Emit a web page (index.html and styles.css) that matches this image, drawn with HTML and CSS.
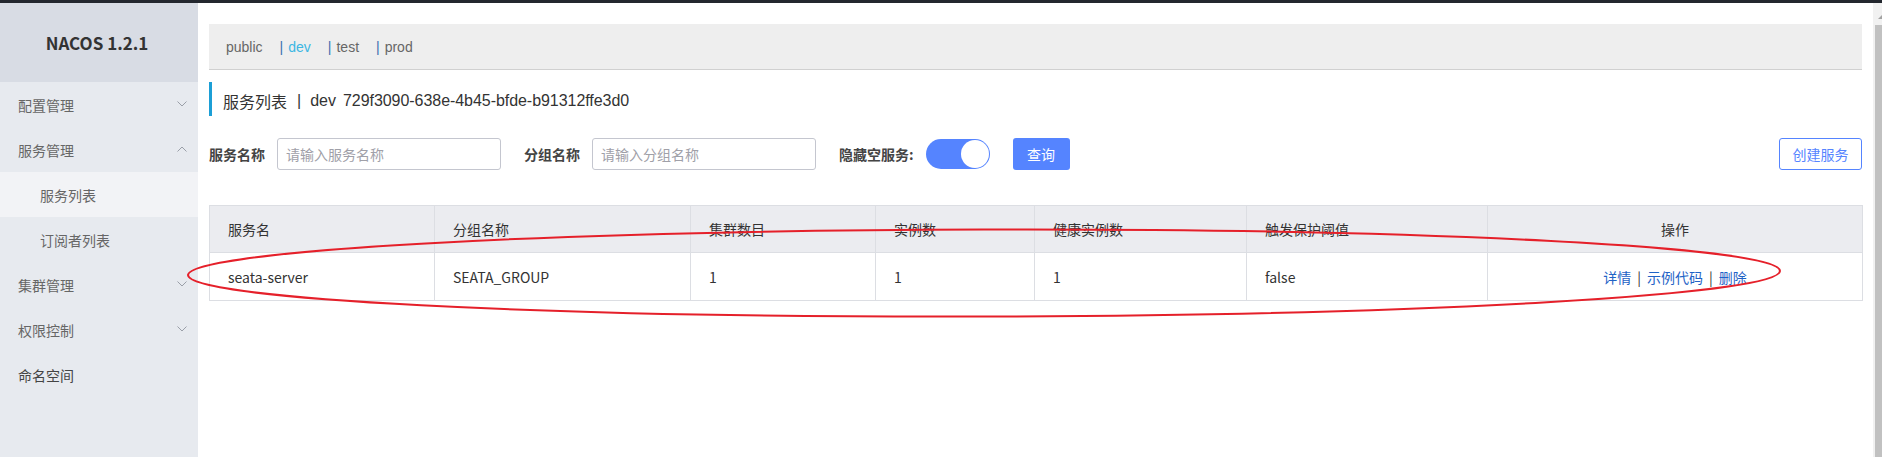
FILE: index.html
```html
<!DOCTYPE html>
<html lang="zh">
<head>
<meta charset="utf-8">
<title>Nacos</title>
<link rel="stylesheet" href="styles.css">
</head>
<body>
<div class="topbar"></div>
<div class="layout">
  <aside class="sidebar">
    <div class="sidebar-head">NACOS 1.2.1</div>
    <div class="menu-item"><span>配置管理</span><svg class="chev" width="10" height="6" viewBox="0 0 10 6"><polyline points="0.5,0.5 5,5 9.5,0.5" fill="none" stroke="#9a9fa8" stroke-width="1"/></svg></div>
    <div class="menu-item"><span>服务管理</span><svg class="chev" width="10" height="6" viewBox="0 0 10 6"><polyline points="0.5,5.5 5,1 9.5,5.5" fill="none" stroke="#9a9fa8" stroke-width="1"/></svg></div>
    <div class="menu-item sub active"><span>服务列表</span></div>
    <div class="menu-item sub"><span>订阅者列表</span></div>
    <div class="menu-item"><span>集群管理</span><svg class="chev" width="10" height="6" viewBox="0 0 10 6"><polyline points="0.5,0.5 5,5 9.5,0.5" fill="none" stroke="#9a9fa8" stroke-width="1"/></svg></div>
    <div class="menu-item"><span>权限控制</span><svg class="chev" width="10" height="6" viewBox="0 0 10 6"><polyline points="0.5,0.5 5,5 9.5,0.5" fill="none" stroke="#9a9fa8" stroke-width="1"/></svg></div>
    <div class="menu-item dark"><span>命名空间</span></div>
  </aside>
  <main class="main">
    <div class="ns-bar">
      <span class="ns-item">public</span>
      <span class="ns-item"><span class="pipe">|</span><span class="ns-active">dev</span></span>
      <span class="ns-item"><span class="pipe">|</span>test</span>
      <span class="ns-item"><span class="pipe">|</span>prod</span>
    </div>
    <div class="page-title">
      <span class="cjk">服务列表</span><span class="tsep">|</span><span class="tdev">dev</span><span class="uuid">729f3090-638e-4b45-bfde-b91312ffe3d0</span>
    </div>
    <div class="filters">
      <label class="flabel">服务名称</label>
      <div class="input"><span class="ph">请输入服务名称</span></div>
      <label class="flabel gap">分组名称</label>
      <div class="input"><span class="ph">请输入分组名称</span></div>
      <label class="flabel gap">隐藏空服务:</label>
      <div class="switch"><div class="knob"></div></div>
      <button class="btn-primary">查询</button>
      <div class="spacer"></div>
      <button class="btn-outline">创建服务</button>
    </div>
    <table class="grid">
      <colgroup>
        <col style="width:225px"><col style="width:256px"><col style="width:185px"><col style="width:159px"><col style="width:212px"><col style="width:241px"><col style="width:375px">
      </colgroup>
      <thead>
        <tr><th>服务名</th><th>分组名称</th><th>集群数目</th><th>实例数</th><th>健康实例数</th><th>触发保护阈值</th><th class="center">操作</th></tr>
      </thead>
      <tbody>
        <tr><td>seata-server</td><td>SEATA_GROUP</td><td>1</td><td>1</td><td>1</td><td>false</td><td class="center ops"><a>详情</a><span class="osep">|</span><a>示例代码</a><span class="osep">|</span><a>删除</a></td></tr>
      </tbody>
    </table>
  </main>
  <div class="scrollbar"><div class="arrow"></div><div class="thumb"></div></div>
</div>
<svg class="annot" width="1882" height="457" viewBox="0 0 1882 457"><ellipse cx="984" cy="273" rx="796" ry="43.5" transform="rotate(-0.15 984 273)" fill="none" stroke="#e5202a" stroke-width="2"/></svg>
</body>
</html>
```
FILE: styles.css
```css
html, body {
  margin: 0;
  height: 100%;
  overflow: hidden;
}
body {
  position: relative;
  font-family: "Noto Sans CJK SC", "Liberation Sans", sans-serif;
  font-size: 14px;
  color: #333;
  background: #fff;
}
.topbar {
  height: 3px;
  background: #23272e;
}
.layout {
  display: flex;
  height: calc(100% - 3px);
}
.sidebar {
  flex: none;
  width: 198px;
  background: #e7eaef;
}
.sidebar-head {
  height: 79px;
  background: #d8dce4;
  display: flex;
  align-items: center;
  justify-content: center;
  font-weight: bold;
  font-size: 17px;
  color: #333;
  padding-right: 4px;
  box-sizing: border-box;
}
.menu-item {
  height: 45px;
  display: flex;
  align-items: center;
  justify-content: space-between;
  padding: 0 11px 0 18px;
  color: #666;
  font-size: 14px;
}
.menu-item.sub {
  padding-left: 40px;
}
.menu-item.active {
  background: #f2f3f6;
}
.menu-item.dark {
  color: #444;
}
.chev {
  display: block;
  margin-top: -2px;
}
.main {
  flex: 1;
  padding: 21px 11px 0;
  min-width: 0;
}
.ns-bar {
  height: 45px;
  background: #eeeeee;
  border-bottom: 1px solid #d0d0d0;
  display: flex;
  align-items: center;
  padding-left: 17px;
  font-family: "Liberation Sans", "Noto Sans CJK SC", sans-serif;
  font-size: 14px;
  color: #666;
}
.ns-item + .ns-item {
  margin-left: 17px;
}
.pipe {
  color: #3d6fae;
  margin-right: 5px;
}
.ns-active {
  color: #3cb7e3;
}
.page-title {
  margin-top: 12px;
  height: 34px;
  border-left: 3px solid #1c9fd6;
  padding-left: 11px;
  display: flex;
  align-items: center;
  font-family: "Liberation Sans", "Noto Sans CJK SC", sans-serif;
  font-size: 16px;
  color: #333;
  padding-top: 4px;
  box-sizing: border-box;
}
.cjk {
  font-family: "Noto Sans CJK SC", sans-serif;
}
.tsep {
  margin: 0 9px 0 10px;
}
.tdev {
  margin-right: 7px;
}
.uuid {
  letter-spacing: -0.05px;
}
.filters {
  margin-top: 22px;
  height: 32px;
  display: flex;
  align-items: center;
}
.flabel {
  font-weight: bold;
  color: #444;
  margin-right: 12px;
}
.flabel.gap {
  margin-left: 23px;
}
.input {
  width: 224px;
  height: 32px;
  box-sizing: border-box;
  border: 1px solid #c4c6cf;
  border-radius: 3px;
  display: flex;
  align-items: center;
  padding-left: 8px;
}
.ph {
  color: #a0a0a8;
}
.switch {
  width: 64px;
  height: 30px;
  border-radius: 15px;
  background: #5584ff;
  display: flex;
  align-items: center;
  justify-content: flex-end;
  padding: 0 1px;
  box-sizing: border-box;
}
.knob {
  width: 28px;
  height: 28px;
  border-radius: 50%;
  background: #fff;
}
.btn-primary {
  margin-left: 23px;
  width: 57px;
  height: 32px;
  border: none;
  border-radius: 3px;
  background: #5584ff;
  color: #fff;
  font-family: inherit;
  font-size: 14px;
  padding: 0;
}
.spacer {
  flex: 1;
}
.btn-outline {
  width: 83px;
  height: 32px;
  border: 1px solid #5584ff;
  border-radius: 3px;
  background: #fff;
  color: #5584ff;
  font-family: inherit;
  font-size: 14px;
  padding: 0;
}
.grid {
  margin-top: 35px;
  width: 1653px;
  table-layout: fixed;
  border-collapse: collapse;
  border: 1px solid #dcdee3;
}
.grid th, .grid td {
  border: 1px solid #dcdee3;
  text-align: left;
  padding: 0 18px;
  font-weight: normal;
  color: #333;
}
.grid th {
  height: 46px;
  background: #ebecf0;
}
.grid td {
  height: 47px;
}
.grid .center {
  text-align: center;
}
.ops a {
  color: #1f63c6;
}
.osep {
  margin: 0 6px;
  color: #333;
}
.scrollbar {
  flex: none;
  width: 9px;
  background: #f1f1f1;
  display: flex;
  flex-direction: column;
}
.arrow {
  width: 0;
  height: 0;
  margin: 12px 0 0 5px;
  border-left: 4px solid transparent;
  border-right: 4px solid transparent;
  border-bottom: 4px solid #a3a3a3;
}
.thumb {
  margin: 6px 0 0 2px;
  flex: 1;
  background: #c1c1c1;
}
.annot {
  position: absolute;
  left: 0;
  top: 0;
  pointer-events: none;
}
```
